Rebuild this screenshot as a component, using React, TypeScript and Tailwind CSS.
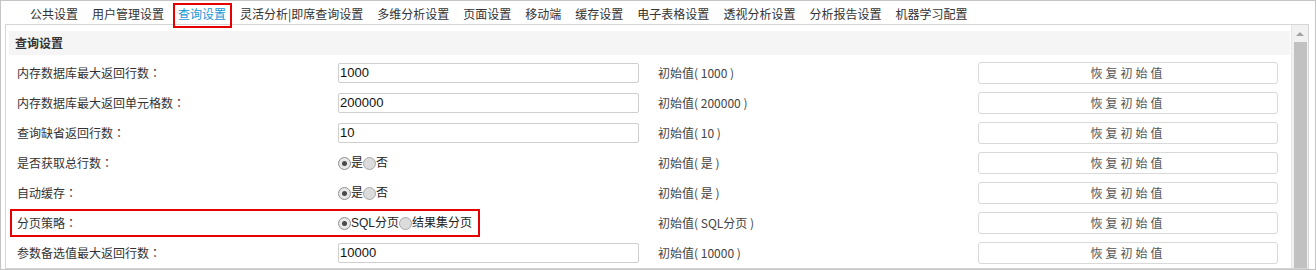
import React from "react";

const tabs = [
  "公共设置",
  "用户管理设置",
  "查询设置",
  "灵活分析|即席查询设置",
  "多维分析设置",
  "页面设置",
  "移动端",
  "缓存设置",
  "电子表格设置",
  "透视分析设置",
  "分析报告设置",
  "机器学习配置",
];

type Row =
  | { label: string; kind: "input"; value: string; init: string }
  | { label: string; kind: "radio"; options: string[]; init: string; boxed?: boolean };

const rows: Row[] = [
  { label: "内存数据库最大返回行数", kind: "input", value: "1000", init: "初始值( 1000 )" },
  { label: "内存数据库最大返回单元格数", kind: "input", value: "200000", init: "初始值( 200000 )" },
  { label: "查询缺省返回行数", kind: "input", value: "10", init: "初始值( 10 )" },
  { label: "是否获取总行数", kind: "radio", options: ["是", "否"], init: "初始值( 是 )" },
  { label: "自动缓存", kind: "radio", options: ["是", "否"], init: "初始值( 是 )" },
  { label: "分页策略", kind: "radio", options: ["SQL分页", "结果集分页"], init: "初始值( SQL分页 )", boxed: true },
  { label: "参数备选值最大返回行数", kind: "input", value: "10000", init: "初始值( 10000 )" },
];

function Radio({ checked }: { checked: boolean }) {
  return checked ? (
    <span className="flex h-[13px] w-[13px] items-center justify-center rounded-full border border-[#8f8f8f] bg-[#e8e8e8]">
      <span className="h-[5px] w-[5px] rounded-full bg-[#4a4a4a]" />
    </span>
  ) : (
    <span className="h-[13px] w-[13px] rounded-full border border-[#a9a9a9] bg-[#dcdcdc]" />
  );
}

export default function App() {
  return (
    <div className="h-[270px] w-[1316px] overflow-hidden border border-[#c4c4c4] bg-white font-['Noto_Sans_CJK_SC',sans-serif] text-[12px] text-[#333]">
      {/* Tabs */}
      <div className="flex h-[23px] pl-[22px] pt-[5px] leading-4">
        {tabs.map((t, i) =>
          i === 2 ? (
            <span key={t} className="relative px-[7px] text-[#1a96d4]">
              {t}
              <span className="absolute -bottom-[4px] -top-[3px] left-[2px] right-[1px] border-2 border-[#e60000]" />
            </span>
          ) : (
            <span key={t} className="px-[7px]">
              {t}
            </span>
          )
        )}
      </div>

      {/* Panel */}
      <div className="ml-[4px] flex h-[245px] w-[1304px] border border-[#d6d6d6]">
        <div className="flex-1 overflow-hidden">
          <div className="ml-[3px] mr-[1px] mt-[6px] flex h-[24px] items-center bg-[#f5f5f5] pl-[6px] font-bold">
            查询设置
          </div>
          <div className="mt-[3px]">
            {rows.map((r) => (
              <div
                key={r.label}
                className="relative grid h-[30px] grid-cols-[321px_320px_320px_300px] items-center pl-[11px]"
              >
                {r.kind === "radio" && r.boxed && (
                  <span className="absolute left-[4px] top-[1px] h-[28px] w-[470px] border-2 border-[#e60000]" />
                )}
                <span>
                  {r.label}
                  <span className="font-['Noto_Sans_CJK_TC',sans-serif]">：</span>
                </span>
                {r.kind === "input" ? (
                  <div className="flex h-[20px] w-[301px] items-center rounded-[2px] border border-[#cfcfcf] pl-[1px] font-['Liberation_Sans',sans-serif] text-[13px] text-[#111]">
                    {r.value}
                  </div>
                ) : (
                  <div className="flex items-center">
                    {r.options.map((o, i) => (
                      <React.Fragment key={o}>
                        <Radio checked={i === 0} />
                        <span className="font-['Liberation_Sans','Noto_Sans_CJK_SC',sans-serif] text-[12px] leading-4 text-[#222]">
                          {o}
                        </span>
                      </React.Fragment>
                    ))}
                  </div>
                )}
                <span className="text-[#444]">{r.init}</span>
                <div className="flex h-[22px] w-[300px] items-center justify-center rounded-[3px] border border-[#d9d9d9] bg-white tracking-[3px] text-[#555]">
                  恢复初始值
                </div>
              </div>
            ))}
          </div>
        </div>

        {/* Scrollbar */}
        <div className="flex w-[17px] flex-col items-center border-l border-[#e6e6e6] bg-[#f1f1f1]">
          <div className="flex h-[17px] items-center justify-center">
            <span className="h-0 w-0 border-x-[4px] border-b-[4px] border-x-transparent border-b-[#a3a3a3]" />
          </div>
          <div className="w-[13px] flex-1 bg-[#c1c1c1]" />
        </div>
      </div>
    </div>
  );
}
